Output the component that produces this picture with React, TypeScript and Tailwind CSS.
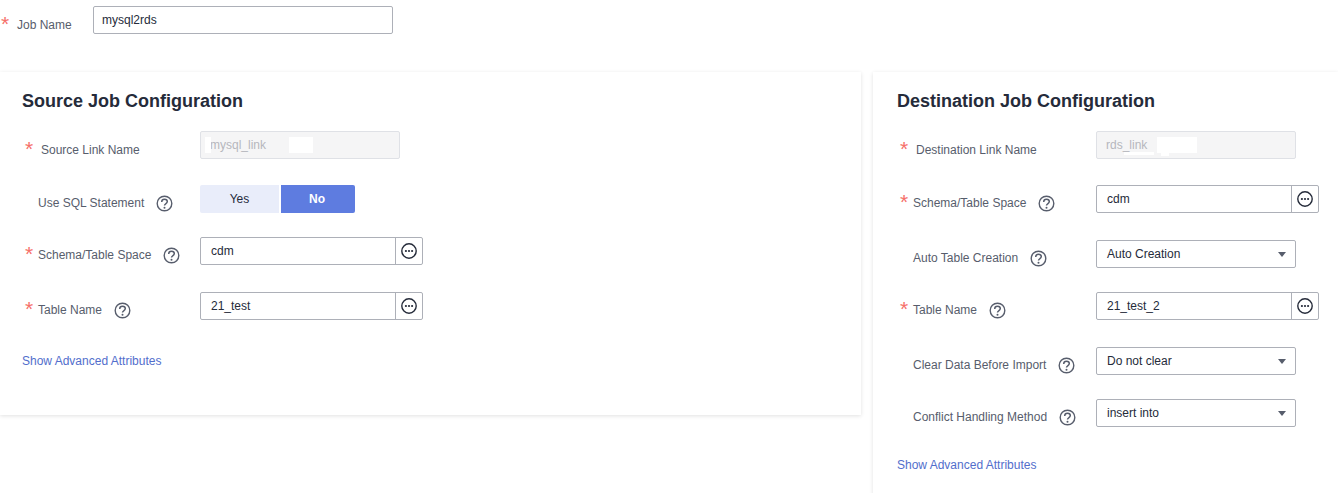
import React from 'react';

function HelpIcon() {
  return (
    <svg width="17" height="17" viewBox="0 0 17 17" fill="none" className="shrink-0">
      <circle cx="8.5" cy="8.5" r="7.3" stroke="#575d6c" strokeWidth="1.4" />
      <path d="M5.7 6.9c0-1.7 1.2-2.7 2.8-2.7s2.8 1 2.8 2.4c0 1.2-.8 1.7-1.6 2.2-.7.5-1.2.9-1.2 1.8" stroke="#575d6c" strokeWidth="1.5" />
      <circle cx="8.5" cy="12.8" r="1" fill="#575d6c" />
    </svg>
  );
}

function MoreIcon() {
  return (
    <svg width="16" height="16" viewBox="0 0 16 16" fill="none">
      <circle cx="8" cy="8" r="7.2" stroke="#252b3a" strokeWidth="1.4" />
      <circle cx="4.9" cy="8" r="1.1" fill="#252b3a" />
      <circle cx="8" cy="8" r="1.1" fill="#252b3a" />
      <circle cx="11.1" cy="8" r="1.1" fill="#252b3a" />
    </svg>
  );
}

function Star({ left = 'left-0' }: { left?: string }) {
  return <span className={`absolute top-[-3px] text-[21px] leading-[21px] text-[#f66f6a] ${left}`}>*</span>;
}

interface RowProps {
  label: string;
  star?: boolean;
  wideStar?: boolean;
  help?: boolean;
  top: string;
  labelWidth: string;
  children: React.ReactNode;
}

function Row({ label, star, wideStar, help, top, labelWidth, children }: RowProps) {
  return (
    <div className={`flex items-start ${top}`}>
      <div className={`flex h-[28px] shrink-0 items-center text-[12px] text-[#575d6c] ${wideStar ? 'pt-[10px]' : 'pt-[8px]'} ${labelWidth}`}>
        <span className={`relative flex items-center ${wideStar ? 'pl-[16px]' : 'pl-[13px]'}`}>
          {star && <Star />}
          {label}
        </span>
        {help && <span className="ml-[12px] flex"><HelpIcon /></span>}
      </div>
      {children}
    </div>
  );
}

function TextInput({ value }: { value: string }) {
  return (
    <div className="flex h-[28px] w-[223px] rounded-[2px] border border-[#adb0b8] bg-white">
      <div className="flex flex-1 items-center pl-[10px] text-[12px] text-[#252b3a]">{value}</div>
      <div className="flex w-[27px] items-center justify-center border-l border-[#adb0b8]"><MoreIcon /></div>
    </div>
  );
}

function SelectBox({ value }: { value: string }) {
  return (
    <div className="flex h-[28px] w-[200px] items-center justify-between rounded-[2px] border border-[#adb0b8] bg-white pl-[10px] pr-[9px] text-[12px] text-[#252b3a]">
      {value}
      <span className="h-0 w-0 border-x-[4px] border-t-[5px] border-x-transparent border-t-[#575d6c]" />
    </div>
  );
}

function DisabledInput({ value, children }: { value: string; children?: React.ReactNode }) {
  return (
    <div className="relative flex h-[28px] w-[200px] items-center rounded-[2px] border border-[#dfe1e6] bg-[#f5f5f6] pl-[9px] text-[12px] text-[#b5b7bd]">
      {value}
      {children}
    </div>
  );
}

function App() {
  return (
    <div className="h-[493px] overflow-hidden bg-white font-['Liberation_Sans',Arial,sans-serif]">
      <div className="flex h-[72px] items-start pt-[6px]">
        <div className="flex h-[28px] w-[93px] items-center pt-[10px] text-[12px] text-[#575d6c]">
          <span className="relative pl-[17px]">
            <Star left="left-[1px]" />
            Job Name
          </span>
        </div>
        <div className="flex h-[28px] w-[300px] items-center rounded-[2px] border border-[#adb0b8] pl-[8px] text-[12px] text-[#252b3a]">mysql2rds</div>
      </div>

      <div className="flex items-start">
        <section className="h-[343px] w-[861px] shrink-0 pl-[22px] pt-[19px] shadow-[0_1px_4px_rgba(0,0,0,0.12)]">
          <h2 className="text-[18px] font-bold leading-[20px] text-[#252b3a]">Source Job Configuration</h2>
          <div className="pl-[3px]">
            <Row label="Source Link Name" star wideStar top="mt-[20px]" labelWidth="w-[175px]">
              <DisabledInput value="mysql_link">
                <span className="absolute left-[4px] top-[5px] h-[16px] w-[6px] bg-white" />
                <span className="absolute left-[88px] top-[5px] h-[16px] w-[24px] bg-white" />
              </DisabledInput>
            </Row>
            <Row label="Use SQL Statement" help top="mt-[26px]" labelWidth="w-[175px]">
              <div className="flex h-[28px] gap-[2px] text-[12px]">
                <div className="flex h-[28px] w-[79px] items-center justify-center rounded-l-[2px] bg-[#e9edfa] text-[#252b3a]">Yes</div>
                <div className="flex h-[28px] w-[74px] items-center justify-center rounded-r-[2px] bg-[#5e7ce0] pr-[2px] font-bold text-white">No</div>
              </div>
            </Row>
            <Row label="Schema/Table Space" star help top="mt-[24px]" labelWidth="w-[175px]">
              <TextInput value="cdm" />
            </Row>
            <Row label="Table Name" star help top="mt-[27px]" labelWidth="w-[175px]">
              <TextInput value="21_test" />
            </Row>
          </div>
          <a className="mt-[34px] block text-[12px] leading-[14px] text-[#526ecc]">Show Advanced Attributes</a>
        </section>

        <section className="ml-[12px] h-[480px] flex-1 pl-[24px] pt-[19px] shadow-[0_1px_4px_rgba(0,0,0,0.12)]">
          <h2 className="text-[18px] font-bold leading-[20px] text-[#252b3a]">Destination Job Configuration</h2>
          <div className="pl-[3px]">
            <Row label="Destination Link Name" star wideStar top="mt-[20px]" labelWidth="w-[196px]">
              <DisabledInput value="rds_link">
                <span className="absolute left-[60px] top-[5px] h-[16px] w-[40px] bg-white" />
                <span className="absolute left-[27px] top-[20px] h-[3px] w-[30px] bg-white" />
                <span className="absolute left-[64px] top-[21px] h-[3px] w-[8px] bg-white" />
              </DisabledInput>
            </Row>
            <Row label="Schema/Table Space" star help top="mt-[26px]" labelWidth="w-[196px]">
              <TextInput value="cdm" />
            </Row>
            <Row label="Auto Table Creation" help top="mt-[27px]" labelWidth="w-[196px]">
              <SelectBox value="Auto Creation" />
            </Row>
            <Row label="Table Name" star help top="mt-[24px]" labelWidth="w-[196px]">
              <TextInput value="21_test_2" />
            </Row>
            <Row label="Clear Data Before Import" help top="mt-[27px]" labelWidth="w-[196px]">
              <SelectBox value="Do not clear" />
            </Row>
            <Row label="Conflict Handling Method" help top="mt-[24px]" labelWidth="w-[196px]">
              <SelectBox value="insert into" />
            </Row>
          </div>
          <a className="mt-[31px] block text-[12px] leading-[14px] text-[#526ecc]">Show Advanced Attributes</a>
        </section>
      </div>
    </div>
  );
}

export default App;
